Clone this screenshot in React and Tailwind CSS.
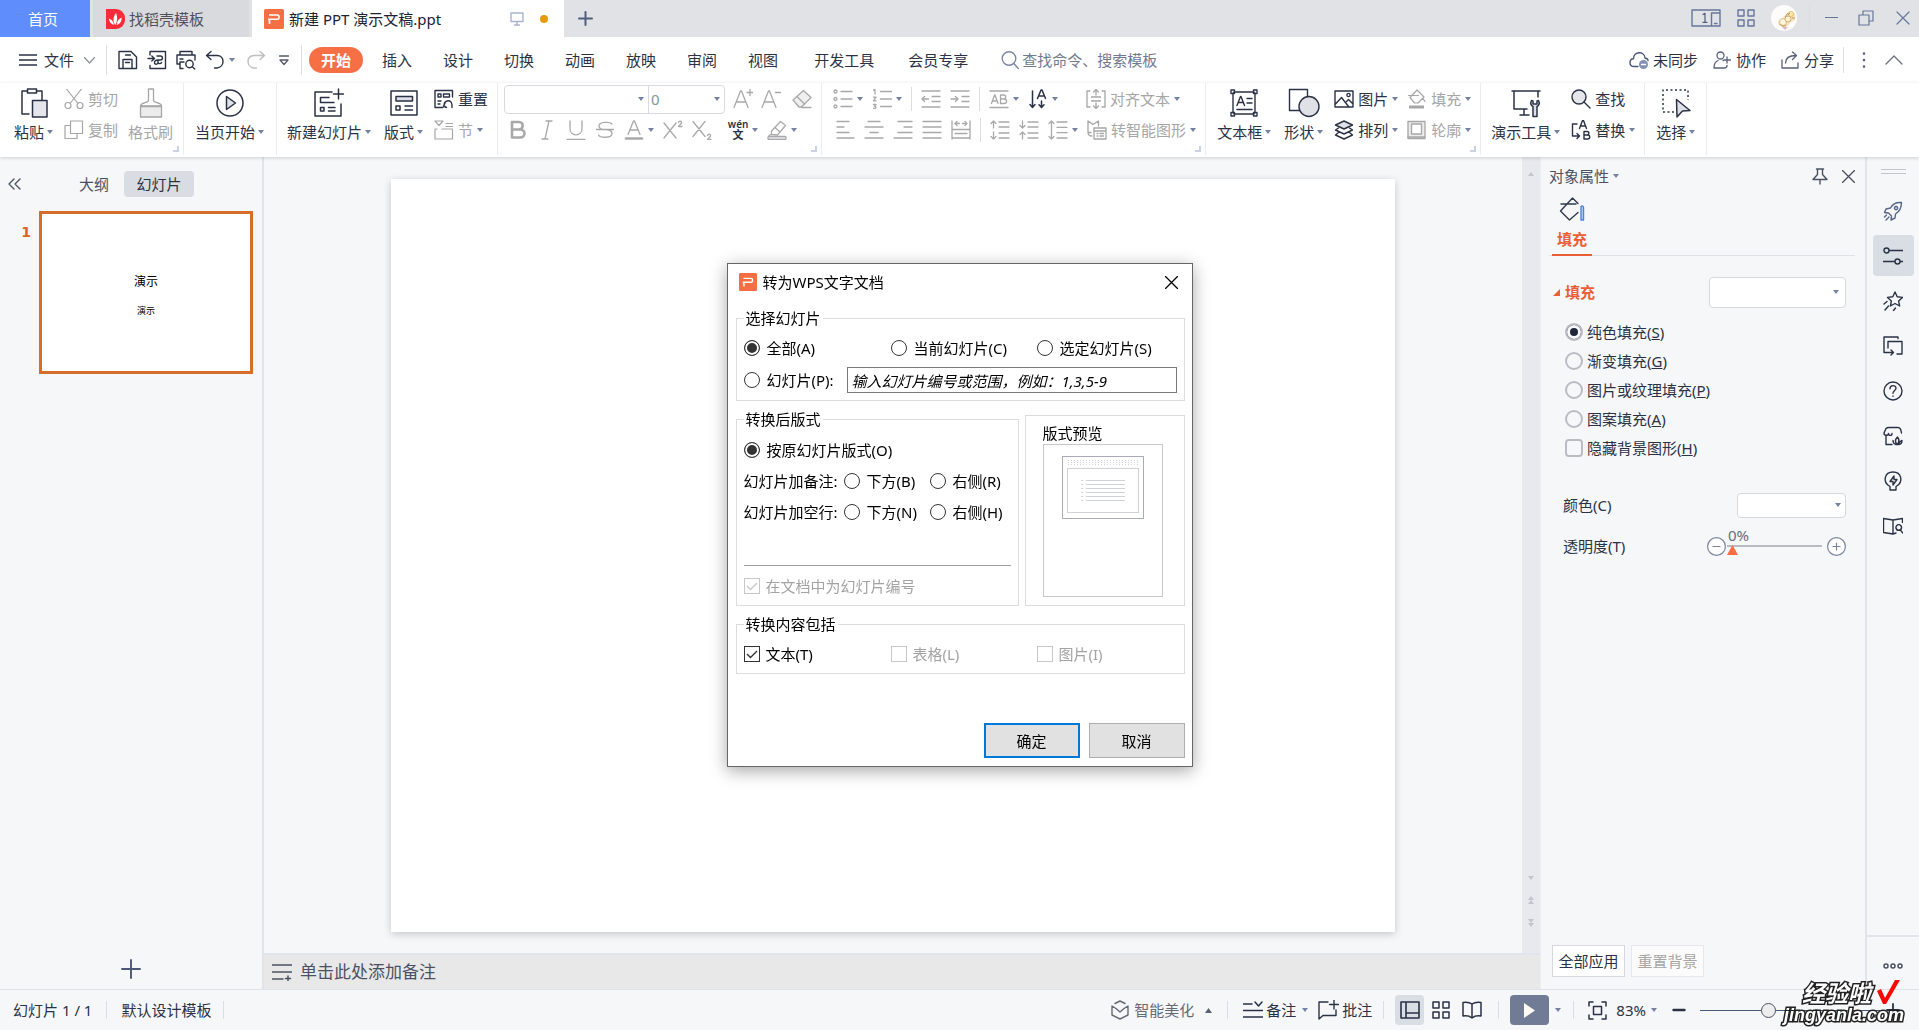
import React from "react";

/* ---------- shared pieces ---------- */

function Icon({ w = 20, h = 20, sw = 1.4, className = "", children }) {
  return (
    <svg
      width={w}
      height={h}
      viewBox={`0 0 ${w} ${h}`}
      fill="none"
      stroke="currentColor"
      strokeWidth={sw}
      strokeLinecap="round"
      strokeLinejoin="round"
      className={"shrink-0 " + className}
      aria-hidden="true"
    >
      {children}
    </svg>
  );
}

function Caret({ className = "text-[#7482a2]" }) {
  return (
    <svg width="6" height="4" viewBox="0 0 6 4" className={"shrink-0 " + className} aria-hidden="true">
      <path d="M0 0h6L3 4z" fill="currentColor" />
    </svg>
  );
}

function Big({ icon, label, caret = true, disabled }) {
  return (
    <button
      type="button"
      disabled={disabled}
      className="flex flex-col items-center gap-1 pt-[5px] whitespace-nowrap disabled:text-[#a6a6a6]"
    >
      <span className="flex h-[30px] items-center">{icon}</span>
      <span className="flex items-center gap-[3px]">
        {label}
        {caret && <Caret />}
      </span>
    </button>
  );
}

function Small({ icon, label, name, caret, disabled }) {
  return (
    <button
      type="button"
      disabled={disabled}
      aria-label={name}
      className="flex h-[30px] items-center gap-1 whitespace-nowrap disabled:text-[#a6a6a6]"
    >
      {icon}
      {label}
      {caret && <Caret />}
    </button>
  );
}

function Group({ children, corner, className = "" }) {
  return (
    <div className={"relative flex h-[72px] items-start border-r border-[#ececf0] " + className}>
      {children}
      {corner && <span className="absolute right-[4px] bottom-[3px] size-[6px] border-r-2 border-b-2 border-[#cdd2e2]" />}
    </div>
  );
}

const VLine = ({ className = "h-6" }) => <span className={"w-px shrink-0 bg-[#dcdde3] " + className} />;

/* ---------- title bar ---------- */

function PptLogo({ size }) {
  return (
    <svg width={size} height={size} viewBox="0 0 20 20" className="shrink-0" aria-hidden="true">
      <rect width="20" height="20" rx="1.5" fill="#f56f45" />
      <path d="M5 11.5v-1.2h8.500a1.500 1.500 0 0 0 1.500-1.500V7.500A1.500 1.500 0 0 0 13.500 6H5M5.500 10.300V15" fill="none" stroke="#fff" strokeWidth="1.6" />
    </svg>
  );
}

function TitleBar() {
  return (
    <header className="flex h-[37px] shrink-0 items-stretch bg-[#e1e2e6]">
      <button type="button" className="w-[90px] bg-[#5f8dfb] pr-1 text-white">首页</button>
      <button type="button" className="ml-[3px] flex w-[156px] items-center gap-1 bg-[#d9dadd] pl-[13px] text-[#4c5161]">
        <svg width="19" height="20" viewBox="0 0 19 20" aria-hidden="true">
          <path d="M0 0h10a9 9 0 0 1 9 9v2a9 9 0 0 1-9 9H0z" fill="#fb2b37" />
          <path d="M9.300 16c-2.400-3-2.600-8 .8-12 1.600 4.500 1.400 8.500-.8 12zM8 16c-3-.8-5-3.200-5-6.500 2.800.8 4.500 3.200 5 6.500zM10.600 16c.4-3.500 1.800-6 5-7.500.2 3.800-1.500 6.700-5 7.500z" fill="#fff" />
        </svg>
        找稻壳模板
      </button>
      <div className="ml-[3px] flex w-[312px] items-center bg-white pl-3 text-[#1c2233]">
        <PptLogo size={20} />
        <span className="ml-[5px] whitespace-nowrap">新建 PPT 演示文稿.ppt</span>
        <Icon w={14} h={14} className="mr-4 ml-auto text-[#aab3cf]">
          <path d="M1 1h12v8.500H1zM7 9.500V13M4.500 13h5" />
        </Icon>
        <span className="mr-4 size-2 rounded-full bg-[#e69b0a]" />
      </div>
      <button type="button" aria-label="新建标签" className="ml-[14px] text-[#4f5d7d]">
        <Icon w={15} h={15} sw={2}><path d="M7.500 1v13M1 7.500h13" /></Icon>
      </button>
      <div className="ml-auto flex items-center pr-[9px] pb-[2px] text-[#66769a]">
        <Icon w={30} h={18} sw={1.4}>
          <path d="M20 17H1V1h28v2.500M20.500 4h8.500v13h-8.500z" />
          <path d="M12 5.500l2-1.200v9M12 13.300h4" stroke="#4f5d7d" strokeWidth="1.2" />
          <path d="M23.500 14.500h2.500" />
        </Icon>
        <Icon w={18} h={18} className="ml-4">
          <path d="M1 1h6v6H1zM11 1h6v6h-6zM1 11h6v6H1zM11 11h6v6h-6z" />
        </Icon>
        <svg width="26" height="26" viewBox="0 0 26 26" className="ml-4" aria-hidden="true">
          <circle cx="13" cy="13" r="13" fill="#fdfcfa" />
          <path d="M7 17c1-3 4-3 6-5s3-6 8-5.500c3 1 4 5 3 8-1 2-4 2-5 3-1 3-5 6-8 4-2-1-5-1.500-4-4.500z" fill="#f3e2bb" />
          <circle cx="12" cy="17" r="3.500" fill="#fff6e0" stroke="#d8b27a" strokeWidth=".8" />
          <circle cx="17" cy="14" r="3" fill="#fdf1d3" stroke="#cfa263" strokeWidth=".8" />
          <circle cx="20" cy="9" r="2.500" fill="#f9e9c0" stroke="#e0b759" strokeWidth=".8" />
          <path d="M9 19c1 2 4 3 6 1M17 10l2-2M21 13l3 0M14 12l3-4" stroke="#c0894a" strokeWidth=".9" fill="none" />
          <path d="M11 22l3 3 3-3z" fill="#e3b8c4" />
        </svg>
        <VLine className="ml-3 h-[25px] bg-[#c6c9d2]" />
        <button type="button" aria-label="最小化" className="ml-[15px]"><Icon w={13} h={16} sw={1.2}><path d="M.5 7.500h12" /></Icon></button>
        <button type="button" aria-label="还原" className="ml-5"><Icon w={16} h={16} sw={1.2}><path d="M1 5h10v10H1zM5 5V1h10v10h-4" /></Icon></button>
        <button type="button" aria-label="关闭" className="ml-[22px]"><Icon w={14} h={14} sw={1.2}><path d="M1 1l12 12M13 1L1 13" /></Icon></button>
      </div>
    </header>
  );
}

/* ---------- menu row ---------- */

function MenuRow() {
  return (
    <div className="flex h-[46px] shrink-0 items-center bg-white pr-4 pl-[19px]">
      <button type="button" className="flex items-center whitespace-nowrap">
        <Icon w={18} h={12} sw={1.3}><path d="M0 1h18M0 6h18M0 11h18" /></Icon>
        <span className="ml-[7px]">文件</span>
        <Icon w={11} h={7} sw={1.2} className="ml-[10px] text-[#8b8f9c]"><path d="M.5 .5l5 5.500 5-5.500" /></Icon>
      </button>
      <VLine className="mx-[11px] h-[30px]" />
      <button type="button" aria-label="保存"><Icon>
        <path d="M1 1.500h12l5.500 5.500v11.500H1zM5 18.500v-9h9v9M7.500 12.500h4M7.500 5h5" />
      </Icon></button>
      <button type="button" aria-label="输出为PDF" className="ml-[9px]"><Icon>
        <path d="M3 5V1.500h15.500v17H3v-3M1 8.500h6M4.800 6l2.700 2.500L4.800 11M10 6h3.500c2.500 0 2.500 4 0 4H11v2.500M11 10c-2 0-3.500 1-3.500 2.800s3.500 2 3.500-.3M11 12.500c.5 1.500 3 1.500 3.500 0" />
      </Icon></button>
      <button type="button" aria-label="打印预览" className="ml-[9px]"><Icon>
        <path d="M4 5V1.500h12V5M4 14H1V5h18v5M4 9h3M7 18.500H4V12h4" /><circle cx="13.5" cy="14" r="3.7" /><path d="M16.200 16.800l2.600 2.200" />
      </Icon></button>
      <button type="button" aria-label="撤销" className="ml-[9px] flex items-center gap-1">
        <Icon><path d="M6 1.500L1.500 5.500 6 9.500M1.500 5.500H12c8 0 8 11.500 0 12.500H9.500" /></Icon>
        <Caret />
      </button>
      <button type="button" aria-label="恢复" disabled className="ml-[11px] text-[#bcbec4]">
        <Icon><path d="M14 1.500l4.500 4-4.500 4M18.500 5.500H8c-8 0-8 11.500 0 12.500h2.500" /></Icon>
      </button>
      <button type="button" aria-label="自定义快速访问" className="ml-[13px] text-[#555b6b]">
        <Icon w={10} h={11} sw={1.3}><path d="M.5 1h9M1 5l4 4.500L9 5z" /></Icon>
      </button>
      <VLine className="mr-[7px] ml-3 h-[30px]" />
      <nav className="flex items-center whitespace-nowrap">
        <button type="button" className="h-[26px] w-[54px] rounded-full bg-[#f76f45] font-bold text-white">开始</button>
        <div className="ml-[19px] flex gap-[31px]">
          {["插入", "设计", "切换", "动画", "放映", "审阅", "视图"].map((t) => (
            <button type="button" key={t}>{t}</button>
          ))}
        </div>
        <div className="ml-9 flex gap-[34px]">
          <button type="button">开发工具</button>
          <button type="button">会员专享</button>
        </div>
      </nav>
      <label className="ml-[33px] flex items-center gap-[3px] text-[#7b86a3]">
        <Icon w={18} h={20}><circle cx="8" cy="8.5" r="6.8" /><path d="M12.800 13.500l4.500 5" /></Icon>
        <input aria-label="查找命令" placeholder="查找命令、搜索模板" className="w-[150px] bg-transparent outline-none placeholder:text-[#727a8f]" />
      </label>
      <div className="ml-auto flex items-center gap-[15px] whitespace-nowrap">
        <button type="button" className="flex items-center gap-1">
          <Icon className="text-[#4b5776]">
            <path d="M9 16.500H5C-.5 16.500 0 9 4.500 8.800 4.500 1 15.500.8 16 8c2 .3 3 1 3 2.500" />
            <circle cx="14.500" cy="14.500" r="4.500" fill="#8291b5" stroke="none" /><path d="M12.500 14.500h4" stroke="#fff" />
          </Icon>
          未同步
        </button>
        <button type="button" className="flex items-center gap-[5px]">
          <Icon w={18} h={18} sw={1.3} className="text-[#59617a]"><circle cx="7.5" cy="4.5" r="3.5" /><path d="M5 9.500c-2.500 1-4 3.500-4 7.500h10c2 0 3-.8 3-2.500M10 9.500h.5M14 6v6M11 9h6.500" /></Icon>
          协作
        </button>
        <button type="button" className="flex items-center gap-[5px]">
          <Icon w={18} h={18} sw={1.3} className="text-[#59617a]"><path d="M1 9v8h16v-5M4.500 12c0-5 4-7.500 10.500-7.500M11.500 1L15.500 4.500 11.500 8.500" /></Icon>
          分享
        </button>
      </div>
      <VLine className="ml-[9px] h-[26px]" />
      <button type="button" aria-label="更多" className="ml-[18px] text-[#59617a]">
        <Icon w={4} h={16}><path d="M2 1.500v.1M2 8v.1M2 14.500v.1" strokeWidth="2.6" /></Icon>
      </button>
      <button type="button" aria-label="折叠功能区" className="ml-[19px] text-[#6b7080]">
        <Icon w={18} h={10} sw={1.3}><path d="M1 9l8-8 8 8" /></Icon>
      </button>
    </div>
  );
}

/* ---------- ribbon ---------- */

const G = "text-[#a9a9a9]";

function LetterIcon({ children, w = 20 }) {
  return <Icon w={w} className={G} sw={1.3}>{children}</Icon>;
}

function Ribbon() {
  return (
    <div className="relative z-10 flex h-[74px] shrink-0 bg-white shadow-[0_1px_4px_rgba(0,0,0,0.16)]">
      <Group corner className="pr-[10px] pl-[14px]">
        <Big label="粘贴" icon={
          <Icon w={28} h={30} sw={1.5}><path d="M9 26H2V3h5M17 3h5v9" /><path d="M7.500 1h9v4h-9z" /><path d="M12.500 12.500H27V29H12.500z" fill="#e4e6ea" /></Icon>
        } />
        <div className="ml-[11px] flex flex-col gap-px pt-px">
          <Small disabled label="剪切" icon={<Icon sw={1.2}><path d="M2.500 0L14 14.500M17.500 0L6 14.500" /><circle cx="4" cy="16.5" r="3" /><circle cx="16" cy="16.5" r="3" /></Icon>} />
          <Small disabled label="复制" icon={<Icon sw={1.2}><path d="M6.500 1h12v12.500h-12zM6.500 5.500H1v13h12v-5" /></Icon>} />
        </div>
        <div className="ml-[10px]">
          <Big disabled caret={false} label="格式刷" icon={
            <Icon w={24} h={30} sw={1.3}><path d="M9.500 1h5v11.500c0 2.500 8 2 8 5.500H1.500c0-3.500 8-3 8-5.500z" /><path d="M1.500 18.500h21v10.500h-21z" fill="#ececec" /></Icon>
          } />
        </div>
      </Group>
      <Group className="pr-3 pl-[11px]">
        <Big label="当页开始" icon={<Icon w={28} h={28} sw={1.5}><circle cx="14" cy="14" r="13" /><path d="M10.500 7.500v13l9-6.500z" fill="#dfe1e6" /></Icon>} />
      </Group>
      <Group className="pr-[9px] pl-[10px]">
        <Big label="新建幻灯片" icon={
          <Icon w={30} h={30} sw={1.5}><path d="M18 4H1v24h26V16M24.500 1v10M19.500 6h10M15 9.500H6.500v5H20M14.500 19.500H21M14.500 23H21M6.500 19.500h3.500V23H6.500z" /></Icon>
        } />
        <div className="ml-[13px]">
          <Big label="版式" icon={
            <Icon w={28} h={26} sw={1.5}><path d="M1 1h26v24H1z" /><path d="M6 6.500h16.500v4.500H6z" fill="#dfe1e6" /><path d="M6 16h4v4H6zM15 16h7.500M15 20h7.500" /></Icon>
          } />
        </div>
        <div className="ml-[11px] flex flex-col gap-px pt-px">
          <Small label="重置" icon={<Icon><path d="M9 18.500H1V1.500h17.500V8M4 5h3v3H4zM9.500 5h6v3h-6zM4 12h3M4 15h2M11 14.500L9.500 17l3 1.500M10 17c0-6 7.500-7.500 8-1v2.500" /></Icon>} />
          <Small disabled caret label="节" icon={<Icon sw={1.2}><path d="M1 1h8L5 5.500zM12 3.500h6.500M12 6.500h6.500M3 9H1v10h17.500V9H8" /></Icon>} />
        </div>
      </Group>
      <Group corner className="pr-[9px] pl-[6px]">
        <div className="flex flex-col gap-px pt-px">
          <div className="flex h-[30px] items-center">
            <div className="flex h-[29px] rounded-sm border border-[#d9dae0]">
              <div className="relative flex w-[143px] items-center">
                <select aria-label="字体" className="h-full w-full appearance-none bg-transparent outline-none"><option></option></select>
                <span className="pointer-events-none absolute right-1"><Caret /></span>
              </div>
              <div className="relative flex w-[76px] items-center border-l border-[#d9dae0]">
                <select aria-label="字号" className="h-full w-full appearance-none bg-transparent pl-[2px] text-[#8d929c] outline-none"><option>0</option></select>
                <span className="pointer-events-none absolute right-1"><Caret /></span>
              </div>
            </div>
            <div className="ml-2 flex gap-2">
              <LetterIcon><path d="M1 18.500L7.500 2h1L15 18.500M3.500 13h9M17 .5v6M14 3.500h6" /></LetterIcon>
              <LetterIcon><path d="M1 18.500L7.500 2h1L15 18.500M3.500 13h9M14.500 3.500h5" /></LetterIcon>
            </div>
            <div className="ml-[11px]">
              <LetterIcon><path d="M1 11L11.500 1.500l7.500 7L9.500 18H7z" fill="#efefef" /><path d="M5 7.500l7.500 7.500M9.500 18.500H19" /></LetterIcon>
            </div>
          </div>
          <div className="flex h-[30px] items-center gap-[9px] pl-1">
            <Small name="加粗" icon={<Icon className={G} sw={2.6}><path d="M4 2h7c5 0 5 7.500 0 7.500H4zM4 9.500h8c6 0 6 8 0 8H4z" /></Icon>} />
            <Small name="倾斜" icon={<LetterIcon><path d="M9 1h6M5 19h6M12 1L8 19" /></LetterIcon>} />
            <Small name="下划线" icon={<LetterIcon><path d="M4 1v7.500c0 8.500 12 8.500 12 0V1M1 19.300h18" /></LetterIcon>} />
            <Small name="删除线" icon={<LetterIcon><path d="M17 4C15 1.500 4 1.500 4 6c0 3 4 3.500 6 3.500M10 9.500c3 0 7 .5 7 4 0 5-12 4.500-13.500 1.500M1.500 9.500h17" /></LetterIcon>} />
            <Small name="字体颜色" caret icon={<LetterIcon><path d="M4 14.500L9.500 1h1L16 14.500M6 10h8" /><path d="M2 18.500h16" strokeWidth="2.6" /></LetterIcon>} />
            <Small name="上标" icon={<LetterIcon><path d="M1 3l12 15M13 3L1 18M15.500 2.500c.5-2 3.500-1.500 3 .5-.3 1-2.500 2.500-3 3.500h3.500" /></LetterIcon>} />
            <Small name="下标" icon={<LetterIcon><path d="M1 1.500l12 15M13 1.500l-12 15M15.500 15.500c.5-2 3.500-1.500 3 .5-.3 1-2.500 2.500-3 3.500h3.500" /></LetterIcon>} />
            <div className="ml-[7px]">
              <Small name="拼音指南" caret icon={
                <span className="flex w-5 flex-col items-center">
                  <span className="text-[10px] leading-[10px] font-semibold">wén</span>
                  <span className="text-[11px] leading-[12px] font-bold">文</span>
                </span>
              } />
            </div>
            <Small name="突出显示" caret icon={<LetterIcon><path d="M13.500 1.500l5 4-8 9.500-6-.5v-3.500zM8 7.500l5 4.500M4.500 14L2 15.500" /><rect x="1" y="16.500" width="18" height="3" rx="1" fill="#e6e8ec" /></LetterIcon>} />
          </div>
        </div>
      </Group>
      <Group corner className="pr-[9px] pl-[11px]">
        <div className="flex flex-col gap-px pt-px">
          <div className="flex h-[30px] items-center gap-[9px]">
            <Small name="项目符号" caret icon={<LetterIcon><path d="M8 2.500h11M8 10h11M8 17.500h11" /><circle cx="2.5" cy="2.5" r="1.5" /><circle cx="2.5" cy="10" r="1.5" /><circle cx="2.5" cy="17.5" r="1.5" /></LetterIcon>} />
            <Small name="编号" caret icon={<LetterIcon><path d="M8.500 2.500h11M8.500 10h11M8.500 17.500h11M1.500 1.200L3 .5v4.500M1.500 8.200h2.500L1.500 11.800H4M1.500 15.500H4l-1.500 1.700c2.500 0 1.500 3-1 2" /></LetterIcon>} />
            <VLine />
            <Small name="减少缩进" icon={<LetterIcon><path d="M1 2h18M11 7.500h8M11 12.500h8M1 18h18M7.500 10H1M3.500 7.500L1 10l2.500 2.500" /></LetterIcon>} />
            <Small name="增加缩进" icon={<LetterIcon><path d="M1 2h18M12 7.500h7M12 12.500h7M1 18h18M1 10h7M5.500 7.500L8 10l-2.500 2.500" /></LetterIcon>} />
            <VLine />
            <Small name="字符间距" caret icon={<LetterIcon><path d="M1 2h18M1 18.500h18M2.500 14.500L5.500 6h.5l3 8.500M3.500 12H8M11.500 6h3c3 0 3 4 0 4h-3zM11.500 10h3.500c3.500 0 3.500 4.500 0 4.500h-3.500z" /></LetterIcon>} />
            <Small name="文字方向" caret icon={<Icon sw={1.5}><path d="M4.500 2v16M2 15.500l2.500 3 2.500-3M9.500 9.500L13 1h1l3.500 8.500M10.500 7h6M13.500 12v6M11 15.800l2.500 2.700 2.500-2.700" /></Icon>} />
            <div className="ml-[19px]">
              <Small disabled caret label="对齐文本" icon={<Icon sw={1.3}><path d="M4 2H1v16h3M16 2h3v16h-3M5.500 8h9M5.500 12h9M10 .5V6M10 19.500V14M7.500 3L10 .5 12.500 3M7.500 17l2.500 2.500 2.500-2.500" /></Icon>} />
            </div>
          </div>
          <div className="flex h-[30px] items-center gap-[9px] pl-[2px]">
            <Small name="左对齐" icon={<LetterIcon><path d="M2 1.500h12M2 7h7M2 12.500h12M2 18h17" /></LetterIcon>} />
            <Small name="居中" icon={<LetterIcon><path d="M4 1.500h12M1 7h18M6 12.500h8M1 18h18" /></LetterIcon>} />
            <Small name="右对齐" icon={<LetterIcon><path d="M5 1.500h14M11 7h8M5 12.500h14M1 18h18" /></LetterIcon>} />
            <Small name="两端对齐" icon={<LetterIcon><path d="M1 1.500h18M1 7h18M1 12.500h18M1 18h18" /></LetterIcon>} />
            <Small name="分散对齐" icon={<LetterIcon><path d="M1 1v18M19 1v18M4 3.500h4.500M11.500 3.500H16M6 1.500L4 3.500l2 2M14 1.500l2 2-2 2M1 9.500h18M4 13.500h12M1 18h18" /></LetterIcon>} />
            <VLine />
            <Small name="减小段距" icon={<LetterIcon><path d="M9 2h10M9 7h10M9 13h10M9 18h10M3.500 8V1M1 3.500L3.500 1 6 3.500M3.500 12v7M1 16.500L3.500 19 6 16.500" /></LetterIcon>} />
            <Small name="增大段距" icon={<LetterIcon><path d="M9 2h10M9 7h10M9 13h10M9 18h10M3.500 1v7M1 5.500L3.500 8 6 5.500M3.500 19v-7M1 14.500L3.500 12 6 14.500" /></LetterIcon>} />
            <Small name="行距" caret icon={<LetterIcon><path d="M9 2h10M9 7.300h10M9 12.700h10M9 18h10M3.500 1v18M1 3.500L3.500 1 6 3.500M1 16.500L3.500 19 6 16.500" /></LetterIcon>} />
            <Small disabled caret label="转智能图形" icon={<Icon sw={1.3}><path d="M4 12.500H1V1l5 3.500L11.500 1v5M1 12.500c0 2 1 3.500 4 3.500M7 8h12v11H7zM7 11h12M10 13.500h1M13 13.500h3.500M10 16h1M13 16h3.500" /></Icon>} />
          </div>
        </div>
      </Group>
      <Group corner className="pr-[9px] pl-[11px]">
        <Big label="文本框" icon={
          <Icon w={28} h={28} sw={1.4}><path d="M3 4v20M25 4v20M4 3h20M4 25h20M1 1h3.500v3.500H1zM23.500 1H27v3.500h-3.500zM1 23.500h3.500V27H1zM23.500 23.500H27V27h-3.500zM7 16.500l3.500-9h.5l3.500 9M8 13.500h5.500M17 9.500h5M17 14h5M7 20.500h15" /></Icon>
        } />
        <div className="ml-[13px]">
          <Big label="形状" icon={<Icon w={32} h={30} sw={1.4}><path d="M1.500 1.500h18v21h-18z" /><circle cx="21" cy="18.5" r="10" fill="#dfe1e6" /></Icon>} />
        </div>
        <div className="ml-[11px] flex flex-col gap-px pt-px">
          <Small caret label="图片" icon={<Icon><path d="M1 2h18v16H1zM1.500 15l6-6.500 7 9M12.500 12.500l2-2 4 4" /><circle cx="14.5" cy="6" r="1.6" /></Icon>} />
          <Small caret label="排列" icon={<Icon><path d="M10 1l8.500 4L10 9 1.500 5z" fill="#dfe1e6" /><path d="M4.500 8l-3 2 8.500 4 8.500-4-3-2M4.500 12.500l-3 2.500 8.500 4 8.500-4-3-2.500" /></Icon>} />
        </div>
        <div className="ml-[9px] flex flex-col gap-px pt-px">
          <Small disabled caret label="填充" icon={<Icon sw={1.2}><path d="M3 8.500L10 1l7 7-6 6H7.500zM1.500 6.500h10M16 9.500l2 3" /><path d="M2 18h15" strokeWidth="3" strokeLinecap="butt" /></Icon>} />
          <Small disabled caret label="轮廓" icon={<Icon sw={1.3}><path d="M1 1.500h17v17H1z" fill="#ececec" /><path d="M4.500 4h10v10h-10z" fill="#fff" /><path d="M1 17h17" /></Icon>} />
        </div>
      </Group>
      <Group className="pr-[9px] pl-[10px]">
        <Big label="演示工具" icon={
          <Icon w={30} h={30} sw={1.5}><path d="M1 3h28M3 3v18h13M27 3v6M13 21v6M9 27h9" /><path d="M20.500 12.500c-1.500 3-.5 5 1.500 6v10h4v-10c2-1 3-3 1.500-6l-1.500.5v3h-4v-3z" fill="#dfe1e6" /></Icon>
        } />
        <div className="ml-[11px] flex flex-col gap-px pt-px">
          <Small label="查找" icon={<Icon><circle cx="8" cy="8" r="7" fill="#e4e6ea" /><path d="M13 13l6 6" /></Icon>} />
          <Small caret label="替换" icon={<Icon><path d="M6 4H1.500v12H8M6 13.500L8.500 16 6 18.500M8.500 8.500l3-8h1l3 8M9.500 6h5M13 11.500h3c2.500 0 2.500 3.500 0 3.500h-3zM13 15h3.500c3 0 3 4 0 4H13z" /></Icon>} />
        </div>
      </Group>
      <Group className="pr-[11px] pl-[11px]">
        <Big label="选择" icon={
          <Icon w={30} h={30} sw={1.5}><path d="M13 24H2V2h25v10" strokeDasharray="2 2.5" strokeLinecap="butt" /><path d="M15.500 11.500l13.500 11-7.500.5-5.500 6z" fill="#dfe1e6" /></Icon>
        } />
      </Group>
    </div>
  );
}

/* ---------- left panel ---------- */

function LeftPanel() {
  return (
    <aside className="flex w-[264px] shrink-0 flex-col border-r-2 border-[#e2e4ec] bg-[#f6f7f9]">
      <div className="mt-[14px] flex h-[26px] items-center text-[#4b5163]">
        <button type="button" aria-label="折叠" className="ml-2"><Icon w={13} h={12} sw={1.4}><path d="M6 1L1 6l5 5M12 1L7 6l5 5" /></Icon></button>
        <button type="button" className="ml-[58px]">大纲</button>
        <button type="button" className="ml-[15px] h-[26px] w-[70px] rounded-sm bg-[#d9dde3] text-[#2b3245]">幻灯片</button>
      </div>
      <div className="mt-[14px] flex pr-[9px]">
        <span className="w-[39px] pt-[11px] pr-2 text-right text-[14px] font-bold text-[#d8661f] [font-family:'DejaVu_Sans',sans-serif]">1</span>
        <div className="flex aspect-[214/163] flex-1 flex-col items-center justify-center border-[3px] border-[#d56e2b] bg-white text-black">
          <span className="mt-2 text-[12px]">演示</span>
          <span className="mt-[9px] text-[9px]">演示</span>
        </div>
      </div>
      <button type="button" aria-label="新建幻灯片" className="mx-auto mt-auto mb-[10px] text-[#4b5776]">
        <Icon w={20} h={20} sw={1.9}><path d="M10 1v18M1 10h18" /></Icon>
      </button>
    </aside>
  );
}

/* ---------- editing area ---------- */

function Editor() {
  return (
    <main className="flex min-w-0 flex-1 flex-col">
      <div className="flex min-h-0 flex-1">
        <div className="flex flex-1 bg-[#f6f7f9] px-[127px] pt-[22px] pb-[21px]">
          <div className="flex-1 bg-white shadow-[0_2px_8px_rgba(0,0,0,0.2)]" />
        </div>
        <div className="flex w-[18px] flex-col items-center bg-[#e8e9ef] pt-[15px] pb-[25px] text-[#c3c5cd]">
          <svg width="6" height="4" viewBox="0 0 6 4" aria-hidden="true"><path d="M0 4h6L3 0z" fill="currentColor" /></svg>
          <svg width="6" height="52" viewBox="0 0 6 52" className="mt-auto" aria-hidden="true">
            <path d="M0 0h6L3 4zM0 24h6l-3-4zM0 28h6l-3-4zM0 43h6l-3 4zM0 47h6l-3 4z" fill="currentColor" />
          </svg>
        </div>
      </div>
      <div className="flex h-9 items-center gap-2 border-t-2 border-[#e2e4ec] bg-[#e8e8e8] pl-2 text-[17px] text-[#4b5163]">
        <Icon w={20} h={17} sw={1.5}><path d="M0 1h20M0 8h20M0 15h11M16 12v5M13.500 14.500h5" /></Icon>
        <span>单击此处添加备注</span>
      </div>
    </main>
  );
}

/* ---------- properties panel ---------- */

function FillOption({ label, hot, ...rest }) {
  return (
    <label className="flex h-[29px] items-center gap-1">
      <input
        type="radio"
        name="fill"
        className="size-[18px] appearance-none rounded-full border-2 border-[#bbbcc2] checked:bg-[#20263a] checked:shadow-[inset_0_0_0_3px_#f9fafb]"
        {...rest}
      />
      <span>{label}(<span className="underline">{hot}</span>)</span>
    </label>
  );
}

function Properties() {
  return (
    <aside className="flex w-[327px] shrink-0 flex-col border-r-2 border-l border-r-[#e2e4ec] border-l-[#eceef2] bg-[#f6f7f9] pr-[10px] pl-2">
      <div className="mt-[9px] flex h-5 items-center text-[#4b5163]">
        <button type="button" className="flex items-center gap-1">对象属性<Caret /></button>
        <button type="button" aria-label="固定" className="ml-auto"><Icon w={18} h={17}><path d="M5.500 1h7M6.500 1v5.500L2 11.500h14l-4.500-5V1M9 11.500V16" /></Icon></button>
        <button type="button" aria-label="关闭" className="ml-[13px]"><Icon w={13} h={13}><path d="M.5 .5l12 12M12.500 .5l-12 12" /></Icon></button>
      </div>
      <div className="border-b border-[#e0e2e8] pl-[3px]">
        <button type="button" className="-mb-px flex h-[70px] w-10 flex-col items-center justify-end gap-2 border-b-2 border-[#ea5f35] pb-[5px] font-bold text-[#ea5f35]">
          <Icon w={26} h={24} className="text-[#333a4c]">
            <path d="M2 7h15M17 4.500L13.500 1 1.500 14l9 9L19 15.500M17 4.500l2 2" />
            <path d="M22 9.500c1-1 2.500-.5 2.500 1V23H22z" fill="#c3d7fb" stroke="#4d80dd" />
          </Icon>
          填充
        </button>
      </div>
      <div className="mt-5 flex h-8 items-center pr-[9px]">
        <svg width="7" height="7" viewBox="0 0 7 7" className="ml-1" aria-hidden="true"><path d="M7 0v7H0z" fill="#ea5f35" /></svg>
        <span className="ml-[5px] font-bold text-[#ea5f35]">填充</span>
        <div className="relative ml-auto flex h-[31px] w-[137px] items-center">
          <select aria-label="填充样式" className="h-full w-full appearance-none rounded-sm border border-[#d6d8de] bg-white"><option></option></select>
          <span className="pointer-events-none absolute right-[7px]"><Caret /></span>
        </div>
      </div>
      <div className="mt-[9px] flex flex-col pl-4">
        <FillOption label="纯色填充" hot="S" defaultChecked />
        <FillOption label="渐变填充" hot="G" />
        <FillOption label="图片或纹理填充" hot="P" />
        <FillOption label="图案填充" hot="A" />
        <label className="flex h-[29px] items-center gap-1">
          <input type="checkbox" className="size-[18px] appearance-none rounded-sm border-2 border-[#bbbcc2] checked:bg-[#20263a]" />
          <span>隐藏背景图形(<span className="underline">H</span>)</span>
        </label>
      </div>
      <div className="mt-[30px] flex h-[26px] items-center justify-between pr-[9px] pl-[14px]">
        <label htmlFor="fill-color">颜色(C)</label>
        <div className="relative flex h-[25px] w-[109px] items-center">
          <select id="fill-color" className="h-full w-full appearance-none rounded-sm border border-[#d6d8de] bg-white"><option></option></select>
          <span className="pointer-events-none absolute right-[5px]"><Caret /></span>
        </div>
      </div>
      <div className="mt-4 flex h-6 items-center pr-[9px] pl-[14px]">
        <label htmlFor="alpha">透明度(T)</label>
        <button type="button" aria-label="减少" className="ml-auto text-[#7a849e]"><Icon w={19} h={19} sw={1.2}><circle cx="9.5" cy="9.5" r="8.9" fill="#fff" /><path d="M6 9.500h7" /></Icon></button>
        <div className="relative flex w-[101px] items-center pl-px">
          <span className="absolute -top-[9px] left-[2px] text-[15px] leading-4 text-[#666c7c]">0%</span>
          <input
            id="alpha"
            type="range"
            defaultValue="0"
            className="h-5 w-[95px] appearance-none bg-transparent [&::-webkit-slider-runnable-track]:h-[2px] [&::-webkit-slider-runnable-track]:bg-[#b9bbc3] [&::-webkit-slider-thumb]:h-[10px] [&::-webkit-slider-thumb]:w-[11px] [&::-webkit-slider-thumb]:appearance-none [&::-webkit-slider-thumb]:bg-[#fb6d42] [&::-webkit-slider-thumb]:[clip-path:polygon(50%_0,100%_100%,0_100%)]"
          />
        </div>
        <button type="button" aria-label="增加" className="text-[#7a849e]"><Icon w={19} h={19} sw={1.2}><circle cx="9.5" cy="9.5" r="8.9" fill="#fff" /><path d="M6 9.500h7M9.500 6v7" /></Icon></button>
      </div>
      <div className="mt-auto mb-3 flex gap-[6px] pl-[3px]">
        <button type="button" className="h-8 w-[73px] border border-[#d6d8de] bg-white">全部应用</button>
        <button type="button" disabled className="h-8 w-[73px] border border-[#e6e7eb] bg-[#fbfbfc] text-[#a6a6a6]">重置背景</button>
      </div>
    </aside>
  );
}

/* ---------- side tool strip ---------- */

const tools = [
  ["快捷", <path key="a" d="M18.500 1.500c-6-.5-9.500 2.500-11 5.500L3 8l-1.500 3.500 4 .5 3 3-.5 4 4-2 .5-4c4-2.500 6-5.500 6-11.500zM6 16l-3 3M3.500 14L1.500 16M13 5.500a1.600 1.600 0 1 0 .1 0" />],
  ["属性", <path key="b" d="M6 4.500h14M0 15.500h11M17 15.500h3M6 4.500a2.500 2.500 0 1 0-5 0 2.500 2.500 0 0 0 5 0zM17 15.500a2.500 2.500 0 1 0-5 0 2.500 2.500 0 0 0 5 0z" />],
  ["动画", <path key="c" d="M12 1l2.200 4.800 5.300.6-3.900 3.500 1 5.100-4.600-2.500L7.400 15l1-5.100L4.500 6.400l5.300-.6zM4 10.500l-3 2.500M5.500 15l-3.500 4M12.500 17l-2 2.500" />],
  ["切换", <path key="d" d="M15 2.500V1H1v15.500h9M8 14l2.500 2.500L8 19M5 12V5.500h14V18h-5" />],
  ["帮助", <path key="e" d="M19 10a9 9 0 1 0-18 0 9 9 0 0 0 18 0zM7 7.800c0-4.300 6-4 6-.5 0 2.200-3 2.200-3 5M10 15v.2" />],
  ["稻壳", <path key="f" d="M9 18.500H3V9.500M3 2.500L1 7c0 3 4.500 3 4.500.5C5.500 10 9 10 9 7.500M3 2.500C4 1.500 5 1.500 6 1.500h9c2 0 3 1.500 3.500 5.500M14 18.500c-2.500-3-1-6 .5-7.500 1.500 2 2 5-.5 7.500zM13 18.500c-2-.5-3-1.500-3-4M15 18.500c1-2.500 2-3.500 4-4 0 3-1.500 4-4 4z" />],
  ["灵感", <path key="g" d="M7 15.500C-1 11 1.500 1 10 1s11 10 3 14.500V19H7zM11 5l-4 5.500h3V14l4-5.500h-3z" />],
  ["查阅", <path key="h" d="M19.500 6.500V2.500L10 4 .5 2.500v14L10 18V4M13 17l-3 1M18.500 12a2.800 2.800 0 1 0-5.500 0 2.800 2.800 0 0 0 5.500 0zM17.800 14.500l2 2.500" />],
];

function Strip() {
  return (
    <div className="flex w-[52px] shrink-0 flex-col items-center bg-[#f6f7f9] pt-3">
      <span className="h-[5px] w-[25px] border-y border-[#c4c5ca]" />
      <div className="mt-4 flex flex-col gap-1">
        {tools.map(([name, d], i) => (
          <button
            type="button"
            key={name}
            aria-label={name}
            className={"flex size-[41px] items-center justify-center rounded-sm " + (i === 1 ? "bg-[#d9dde4]" : i === 0 ? "text-[#56648a]" : "")}
          >
            <Icon sw={1.4}>{d}</Icon>
          </button>
        ))}
      </div>
      <div className="mt-auto flex h-[54px] w-full justify-center border-t-2 border-[#e2e4ec] pt-[26px] text-[#4b5163]">
        <Icon w={20} h={6} sw={1.5}><circle cx="3" cy="3" r="2" /><circle cx="10" cy="3" r="2" /><circle cx="17" cy="3" r="2" /></Icon>
      </div>
    </div>
  );
}

/* ---------- status bar ---------- */

function StatusBar() {
  return (
    <footer className="flex h-[41px] shrink-0 items-center border-t border-[#e0e2e9] bg-[#f6f7f9] pl-[13px] whitespace-nowrap">
      <span>幻灯片 1 / 1</span>
      <VLine className="mx-[14px] h-[18px]" />
      <span>默认设计模板</span>
      <VLine className="ml-3 h-[18px]" />
      <div className="ml-auto flex h-full items-center pr-[19px]">
        <button type="button" className="flex items-center text-[#666a75]">
          <Icon w={18} h={20}><path d="M1 6l4 2.500L9 12l4-3.500L17 6v9l-8 4-8-4zM4 3.500L9 1l5 2.500" /></Icon>
          <span className="ml-[5px]">智能美化</span>
          <svg width="7" height="5" viewBox="0 0 7 5" className="ml-[11px]" aria-hidden="true"><path d="M0 5h7L3.500 0z" fill="#5b6070" /></svg>
        </button>
        <VLine className="mx-[15px] h-[18px]" />
        <button type="button" className="flex items-center">
          <Icon w={20} h={18} sw={1.5}><path d="M0 3h9M0 9.500h20M0 16h20M12 1l3.500 4L19 1" /></Icon>
          <span className="mr-[6px] ml-[3px]">备注</span>
          <Caret />
        </button>
        <button type="button" className="ml-[10px] flex items-center gap-[3px]">
          <Icon w={21} h={20}><path d="M10 2H1v17l4-3.500h13V10M16 0v9M11.500 4.500h9" /></Icon>
          批注
        </button>
        <VLine className="mx-[11px] h-[18px]" />
        <button type="button" aria-label="普通视图" className="flex h-[30px] w-[29px] items-center justify-center rounded-sm bg-[#d9dde4]">
          <Icon w={20} h={18} sw={1.6}><path d="M1 1h18v16H1zM6 1v16M6 12h13" /></Icon>
        </button>
        <button type="button" aria-label="幻灯片浏览" className="ml-2"><Icon w={18} h={18} sw={1.5}><path d="M1 1h6v6H1zM11 1h6v6h-6zM1 11h6v6H1zM11 11h6v6h-6z" /></Icon></button>
        <button type="button" aria-label="阅读视图" className="ml-3"><Icon w={20} h={18} sw={1.5}><path d="M10 3C7 1 4 1 1 1.500V15c3-.5 6-.5 9 2 3-2.500 6-2.500 9-2V1.500c-3-.5-6-.5-9 1.500zM10 3v14" /></Icon></button>
        <VLine className="mr-[11px] ml-4 h-[18px]" />
        <button type="button" aria-label="放映" className="flex h-[30px] w-[39px] items-center justify-center rounded-sm bg-[#707b95]">
          <svg width="11" height="15" viewBox="0 0 11 15" aria-hidden="true"><path d="M0 0l11 7.500L0 15z" fill="#fffaf3" /></svg>
        </button>
        <span className="ml-[6px]"><Caret /></span>
        <VLine className="ml-3 h-[18px]" />
        <button type="button" aria-label="适应窗口" className="ml-[14px]"><Icon w={19} h={19} sw={1.5}><path d="M1 5V1h4M14 1h4v4M18 14v4h-4M5 18H1v-4M5.500 5.500h8v8h-8z" /></Icon></button>
        <button type="button" className="ml-[9px] flex items-center gap-[5px]">83%<Caret /></button>
        <button type="button" aria-label="缩小" className="ml-[15px]"><Icon w={14} h={14} sw={2.4}><path d="M1.500 7h11" /></Icon></button>
        <input
          aria-label="缩放"
          type="range"
          defaultValue="37"
          className="ml-[14px] h-5 w-[180px] appearance-none bg-transparent [&::-webkit-slider-runnable-track]:h-px [&::-webkit-slider-runnable-track]:bg-[#4b5776] [&::-webkit-slider-thumb]:-mt-[7px] [&::-webkit-slider-thumb]:size-[15px] [&::-webkit-slider-thumb]:appearance-none [&::-webkit-slider-thumb]:rounded-full [&::-webkit-slider-thumb]:border [&::-webkit-slider-thumb]:border-[#4b5163] [&::-webkit-slider-thumb]:bg-[#ededed]"
        />
        <button type="button" aria-label="放大" className="ml-[6px]"><Icon w={14} h={14} sw={1.8}><path d="M7 1v12M1 7h12" /></Icon></button>
      </div>
    </footer>
  );
}

/* ---------- dialog ---------- */

function Radio({ label, className = "gap-[7px]", ...rest }) {
  return (
    <label className={"flex items-center " + className}>
      <input
        type="radio"
        className="size-4 appearance-none rounded-full border border-[#333] bg-white checked:bg-[#333] checked:shadow-[inset_0_0_0_2px_#fff]"
        {...rest}
      />
      {label}
    </label>
  );
}

function Check({ label, checked, disabled }) {
  return (
    <label className={"flex items-center gap-[6px] " + (disabled ? "text-[#a3a3a3]" : "")}>
      <span className="relative flex">
        <input
          type="checkbox"
          defaultChecked={checked}
          disabled={disabled}
          className="size-4 appearance-none border border-[#333] bg-white disabled:border-[#c8c8c8]"
        />
        {checked && (
          <svg width="16" height="16" viewBox="0 0 16 16" className="pointer-events-none absolute inset-0" aria-hidden="true">
            <path d="M3 8l3.500 3.500L13 5" fill="none" stroke={disabled ? "#c8c8c8" : "#333"} strokeWidth="1.4" />
          </svg>
        )}
      </span>
      {label}
    </label>
  );
}

function LayoutPreview() {
  return (
    <svg width="82" height="63" viewBox="0 0 82 63" fill="none" aria-hidden="true">
      <rect x=".5" y=".5" width="81" height="62" fill="#fff" stroke="#a9acb8" />
      <path d="M6 4.500h70M6 6.500h70M6 8.500h70" stroke="#d2d4da" strokeDasharray="1 2" />
      <rect x="5.5" y="12.5" width="71" height="44" stroke="#d2d2d6" />
      <path d="M24 24.500h39M24 28.500h39M24 32.500h39M24 36.500h39M24 40.500h39M24 44.500h39" stroke="#cfd1d8" />
      <path d="M19 24.500h2M19 28.500h2M19 32.500h2M19 36.500h2M19 40.500h2M19 44.500h2" stroke="#cfd1d8" />
    </svg>
  );
}

function Dialog() {
  return (
    <div className="fixed inset-0 z-20 flex items-center justify-center">
      <div role="dialog" aria-label="转为WPS文字文档" className="w-[466px] border border-[#666] bg-white text-black shadow-[0_4px_16px_rgba(0,0,0,0.35)]">
        <div className="flex h-9 items-center pr-[14px] pl-[11px]">
          <PptLogo size={18} />
          <span className="ml-[6px]">转为WPS文字文档</span>
          <button type="button" aria-label="关闭" className="ml-auto"><Icon w={13} h={13} sw={1.3}><path d="M.5 .5l12 12M12.500 .5l-12 12" /></Icon></button>
        </div>
        <div className="pr-[7px] pb-2 pl-2">
          <fieldset className="mt-2 border border-[#dcdcdc] px-[7px] pb-1">
            <legend className="px-[2px]">选择幻灯片</legend>
            <div className="grid h-9 grid-cols-[147px_146px_1fr] items-center pt-1">
              <Radio name="range" label="全部(A)" defaultChecked />
              <Radio name="range" label="当前幻灯片(C)" />
              <Radio name="range" label="选定幻灯片(S)" />
            </div>
            <div className="flex h-8 items-center justify-between">
              <Radio name="range" label="幻灯片(P):" />
              <input aria-label="幻灯片范围" defaultValue="输入幻灯片编号或范围，例如：1,3,5-9" className="h-[26px] w-[330px] border border-[#7a7a7a] px-1 italic outline-none" />
            </div>
          </fieldset>
          <div className="mt-2 flex gap-[6px]">
            <fieldset className="flex-1 border border-[#dcdcdc] px-[7px] pb-[3px]">
              <legend className="px-[2px]">转换后版式</legend>
              <div className="mt-[5px] flex h-[31px] items-center">
                <Radio name="layout" label="按原幻灯片版式(O)" defaultChecked />
              </div>
              <div className="grid h-[31px] grid-cols-[100px_86px_1fr] items-center">
                <span>幻灯片加备注:</span>
                <Radio name="layout" label="下方(B)" />
                <Radio name="layout" label="右侧(R)" />
              </div>
              <div className="grid h-[31px] grid-cols-[100px_86px_1fr] items-center">
                <span>幻灯片加空行:</span>
                <Radio name="layout" label="下方(N)" />
                <Radio name="layout" label="右侧(H)" />
              </div>
              <hr className="mt-[38px] border-[#a0a0a0]" />
              <div className="mt-1 flex h-8 items-center">
                <Check checked disabled label="在文档中为幻灯片编号" />
              </div>
            </fieldset>
            <div className="mt-[6px] flex w-[160px] flex-col border border-[#dcdcdc] px-[17px] pt-[7px] pb-2">
              <span>版式预览</span>
              <div className="mt-px flex w-[120px] flex-1 justify-center border border-[#c8c8c8] pt-[11px]">
                <LayoutPreview />
              </div>
            </div>
          </div>
          <fieldset className="mt-2 border border-[#dcdcdc] px-[7px] pb-[3px]">
            <legend className="px-[2px]">转换内容包括</legend>
            <div className="grid h-9 grid-cols-[147px_146px_1fr] items-center pt-1">
              <Check checked label="文本(T)" />
              <Check disabled label="表格(L)" />
              <Check disabled label="图片(I)" />
            </div>
          </fieldset>
          <div className="mt-[49px] flex justify-end gap-[9px]">
            <button type="button" className="h-[35px] w-24 border-2 border-[#0078d7] bg-[#e1e1e1]">确定</button>
            <button type="button" className="h-[35px] w-24 border border-[#adadad] bg-[#e1e1e1]">取消</button>
          </div>
        </div>
      </div>
    </div>
  );
}

/* ---------- corner brand ---------- */

function Brand() {
  return (
    <div className="pointer-events-none absolute right-[15px] bottom-[5px] z-30 flex flex-col items-end gap-px font-bold text-white italic [paint-order:stroke_fill]">
      <div className="flex items-center gap-[6px] pr-1">
        <span className="text-[23px] leading-[24px] [-webkit-text-stroke:3px_#222] [font-family:'Noto_Sans_CJK_SC',sans-serif]">经验啦</span>
        <svg width="23" height="24" viewBox="0 0 23 24" aria-hidden="true"><path d="M0 11l4-2 4 9L18 0h5L9 24H6z" fill="#fb0505" /></svg>
      </div>
      <span className="text-[18px] leading-[20px] [-webkit-text-stroke:3px_#222] [font-family:'Liberation_Sans',sans-serif]">jingyanla.com</span>
    </div>
  );
}

export default function App() {
  return (
    <div className="relative flex h-screen w-full flex-col overflow-hidden bg-[#f6f7f9] text-[15px] leading-5 text-[#2b3245] [font-family:'Noto_Sans','Noto_Sans_CJK_SC',sans-serif]">
      <TitleBar />
      <MenuRow />
      <Ribbon />
      <div className="flex min-h-0 flex-1">
        <LeftPanel />
        <Editor />
        <Properties />
        <Strip />
      </div>
      <StatusBar />
      <Dialog />
      <Brand />
    </div>
  );
}
